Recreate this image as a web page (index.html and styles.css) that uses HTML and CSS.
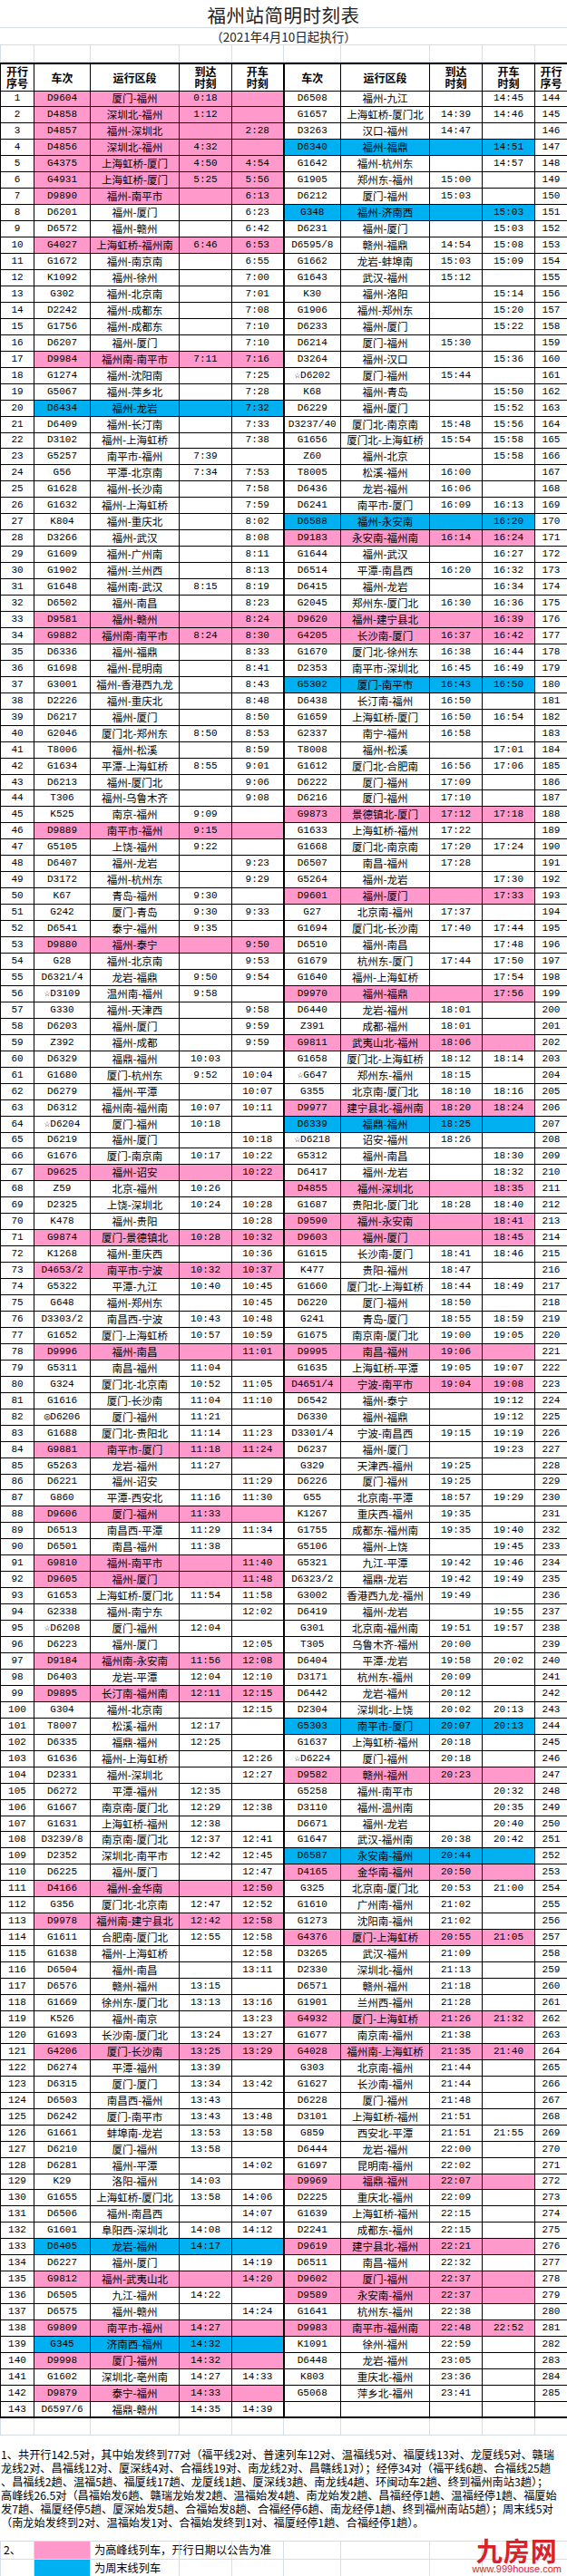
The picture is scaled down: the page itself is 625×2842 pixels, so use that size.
FILE: index.html
```html
<!DOCTYPE html>
<html lang="zh-CN">
<head>
<meta charset="utf-8">
<title>福州站简明时刻表</title>
<link rel="stylesheet" href="styles.css">
</head>
<body>
<div class="sheet">
  <div class="title">福州站简明时刻表</div>
  <div class="subtitle">（2021年4月10日起执行）</div>
  <div class="gridrow"><span></span><span></span><span></span><span></span><span></span><span></span><span></span><span></span><span></span><span></span></div>
  <table class="tt">
    <colgroup><col class="c1"><col class="c2"><col class="c3"><col class="c4"><col class="c5"><col class="c6"><col class="c7"><col class="c8"><col class="c9"><col class="c10"></colgroup>
    <thead>
      <tr><th><span class="hl">开行</span><span class="hl">序号</span></th><th>车次</th><th>运行区段</th><th><span class="hl">到达</span><span class="hl">时刻</span></th><th><span class="hl">开车</span><span class="hl">时刻</span></th><th>车次</th><th>运行区段</th><th><span class="hl">到达</span><span class="hl">时刻</span></th><th><span class="hl">开车</span><span class="hl">时刻</span></th><th><span class="hl">开行</span><span class="hl">序号</span></th></tr>
    </thead>
    <tbody>
<tr class="lp"><td>1</td><td>D9604</td><td>厦门-福州</td><td>0:18</td><td></td><td>D6508</td><td>福州-九江</td><td></td><td>14:45</td><td>144</td></tr>
<tr class="lp"><td>2</td><td>D4858</td><td>深圳北-福州</td><td>1:12</td><td></td><td>G1657</td><td>上海虹桥-厦门北</td><td>14:39</td><td>14:46</td><td>145</td></tr>
<tr class="lp"><td>3</td><td>D4857</td><td>福州-深圳北</td><td></td><td>2:28</td><td>D3263</td><td>汉口-福州</td><td>14:47</td><td></td><td>146</td></tr>
<tr class="lp rb"><td>4</td><td>D4856</td><td>深圳北-福州</td><td>4:32</td><td></td><td>D6340</td><td>福州-福鼎</td><td></td><td>14:51</td><td>147</td></tr>
<tr class="lp"><td>5</td><td>G4375</td><td>上海虹桥-厦门</td><td>4:50</td><td>4:54</td><td>G1642</td><td>福州-杭州东</td><td></td><td>14:57</td><td>148</td></tr>
<tr class="lp"><td>6</td><td>G4931</td><td>上海虹桥-厦门</td><td>5:25</td><td>5:56</td><td>G1905</td><td>郑州东-福州</td><td>15:00</td><td></td><td>149</td></tr>
<tr class="lp"><td>7</td><td>D9890</td><td>福州-南平市</td><td></td><td>6:13</td><td>D6212</td><td>厦门-福州</td><td>15:03</td><td></td><td>150</td></tr>
<tr class="rb"><td>8</td><td>D6201</td><td>福州-厦门</td><td></td><td>6:23</td><td>G348</td><td>福州-济南西</td><td></td><td>15:03</td><td>151</td></tr>
<tr><td>9</td><td>D6572</td><td>福州-赣州</td><td></td><td>6:42</td><td>D6231</td><td>福州-厦门</td><td></td><td>15:03</td><td>152</td></tr>
<tr class="lp"><td>10</td><td>G4027</td><td>上海虹桥-福州南</td><td>6:46</td><td>6:53</td><td>D6595/8</td><td>赣州-福鼎</td><td>14:54</td><td>15:08</td><td>153</td></tr>
<tr><td>11</td><td>G1672</td><td>福州-南京南</td><td></td><td>6:55</td><td>G1662</td><td>龙岩-蚌埠南</td><td>15:03</td><td>15:09</td><td>154</td></tr>
<tr><td>12</td><td>K1092</td><td>福州-徐州</td><td></td><td>7:00</td><td>G1643</td><td>武汉-福州</td><td>15:12</td><td></td><td>155</td></tr>
<tr><td>13</td><td>G302</td><td>福州-北京南</td><td></td><td>7:01</td><td>K30</td><td>福州-洛阳</td><td></td><td>15:14</td><td>156</td></tr>
<tr><td>14</td><td>D2242</td><td>福州-成都东</td><td></td><td>7:08</td><td>G1906</td><td>福州-郑州东</td><td></td><td>15:20</td><td>157</td></tr>
<tr><td>15</td><td>G1756</td><td>福州-成都东</td><td></td><td>7:10</td><td>D6233</td><td>福州-厦门</td><td></td><td>15:22</td><td>158</td></tr>
<tr><td>16</td><td>D6207</td><td>福州-厦门</td><td></td><td>7:10</td><td>D6214</td><td>厦门-福州</td><td>15:30</td><td></td><td>159</td></tr>
<tr class="lp"><td>17</td><td>D9984</td><td>福州南-南平市</td><td>7:11</td><td>7:16</td><td>D3264</td><td>福州-汉口</td><td></td><td>15:36</td><td>160</td></tr>
<tr><td>18</td><td>G1274</td><td>福州-沈阳南</td><td></td><td>7:25</td><td>☆D6202</td><td>厦门-福州</td><td>15:44</td><td></td><td>161</td></tr>
<tr><td>19</td><td>G5067</td><td>福州-萍乡北</td><td></td><td>7:28</td><td>K68</td><td>福州-青岛</td><td></td><td>15:50</td><td>162</td></tr>
<tr class="lb"><td>20</td><td>D6434</td><td>福州-龙岩</td><td></td><td>7:32</td><td>D6229</td><td>福州-厦门</td><td></td><td>15:52</td><td>163</td></tr>
<tr><td>21</td><td>D6409</td><td>福州-长汀南</td><td></td><td>7:33</td><td>D3237/40</td><td>厦门北-南京南</td><td>15:48</td><td>15:56</td><td>164</td></tr>
<tr><td>22</td><td>D3102</td><td>福州-上海虹桥</td><td></td><td>7:38</td><td>G1656</td><td>厦门北-上海虹桥</td><td>15:54</td><td>15:58</td><td>165</td></tr>
<tr><td>23</td><td>G5257</td><td>南平市-福州</td><td>7:39</td><td></td><td>Z60</td><td>福州-北京</td><td></td><td>15:58</td><td>166</td></tr>
<tr><td>24</td><td>G56</td><td>平潭-北京南</td><td>7:34</td><td>7:53</td><td>T8005</td><td>松溪-福州</td><td>16:00</td><td></td><td>167</td></tr>
<tr><td>25</td><td>G1628</td><td>福州-长沙南</td><td></td><td>7:58</td><td>D6436</td><td>龙岩-福州</td><td>16:06</td><td></td><td>168</td></tr>
<tr><td>26</td><td>G1632</td><td>福州-上海虹桥</td><td></td><td>7:59</td><td>D6241</td><td>南平市-厦门</td><td>16:09</td><td>16:13</td><td>169</td></tr>
<tr class="rb"><td>27</td><td>K804</td><td>福州-重庆北</td><td></td><td>8:02</td><td>D6588</td><td>福州-永安南</td><td></td><td>16:20</td><td>170</td></tr>
<tr class="rp"><td>28</td><td>D3266</td><td>福州-武汉</td><td></td><td>8:08</td><td>D9183</td><td>永安南-福州南</td><td>16:14</td><td>16:24</td><td>171</td></tr>
<tr><td>29</td><td>G1609</td><td>福州-广州南</td><td></td><td>8:11</td><td>G1644</td><td>福州-武汉</td><td></td><td>16:27</td><td>172</td></tr>
<tr><td>30</td><td>G1902</td><td>福州-兰州西</td><td></td><td>8:13</td><td>D6514</td><td>平潭-南昌西</td><td>16:20</td><td>16:32</td><td>173</td></tr>
<tr><td>31</td><td>G1648</td><td>福州南-武汉</td><td>8:15</td><td>8:19</td><td>D6415</td><td>福州-龙岩</td><td></td><td>16:34</td><td>174</td></tr>
<tr><td>32</td><td>D6502</td><td>福州-南昌</td><td></td><td>8:23</td><td>G2045</td><td>郑州东-厦门北</td><td>16:30</td><td>16:36</td><td>175</td></tr>
<tr class="lp rp"><td>33</td><td>D9581</td><td>福州-赣州</td><td></td><td>8:24</td><td>D9620</td><td>福州-建宁县北</td><td></td><td>16:39</td><td>176</td></tr>
<tr class="lp rp"><td>34</td><td>G9882</td><td>福州南-南平市</td><td>8:24</td><td>8:30</td><td>G4205</td><td>长沙南-厦门</td><td>16:37</td><td>16:42</td><td>177</td></tr>
<tr><td>35</td><td>D6336</td><td>福州-福鼎</td><td></td><td>8:33</td><td>G1670</td><td>厦门北-徐州东</td><td>16:38</td><td>16:44</td><td>178</td></tr>
<tr><td>36</td><td>G1698</td><td>福州-昆明南</td><td></td><td>8:41</td><td>D2353</td><td>南平市-深圳北</td><td>16:45</td><td>16:49</td><td>179</td></tr>
<tr class="rb"><td>37</td><td>G3001</td><td>福州-香港西九龙</td><td></td><td>8:43</td><td>G5302</td><td>厦门-南平市</td><td>16:43</td><td>16:50</td><td>180</td></tr>
<tr><td>38</td><td>D2226</td><td>福州-重庆北</td><td></td><td>8:48</td><td>D6438</td><td>长汀南-福州</td><td>16:50</td><td></td><td>181</td></tr>
<tr><td>39</td><td>D6217</td><td>福州-厦门</td><td></td><td>8:50</td><td>G1659</td><td>上海虹桥-厦门</td><td>16:50</td><td>16:54</td><td>182</td></tr>
<tr><td>40</td><td>G2046</td><td>厦门北-郑州东</td><td>8:50</td><td>8:53</td><td>G2337</td><td>南宁-福州</td><td>16:58</td><td></td><td>183</td></tr>
<tr><td>41</td><td>T8006</td><td>福州-松溪</td><td></td><td>8:59</td><td>T8008</td><td>福州-松溪</td><td></td><td>17:01</td><td>184</td></tr>
<tr><td>42</td><td>G1634</td><td>平潭-上海虹桥</td><td>8:55</td><td>9:01</td><td>G1612</td><td>厦门北-合肥南</td><td>16:56</td><td>17:06</td><td>185</td></tr>
<tr><td>43</td><td>D6213</td><td>福州-厦门北</td><td></td><td>9:06</td><td>D6222</td><td>厦门-福州</td><td>17:09</td><td></td><td>186</td></tr>
<tr><td>44</td><td>T306</td><td>福州-乌鲁木齐</td><td></td><td>9:08</td><td>D6216</td><td>厦门-福州</td><td>17:10</td><td></td><td>187</td></tr>
<tr class="rp"><td>45</td><td>K525</td><td>南京-福州</td><td>9:09</td><td></td><td>G9873</td><td>景德镇北-厦门</td><td>17:12</td><td>17:18</td><td>188</td></tr>
<tr class="lp"><td>46</td><td>D9889</td><td>南平市-福州</td><td>9:15</td><td></td><td>G1633</td><td>上海虹桥-福州</td><td>17:22</td><td></td><td>189</td></tr>
<tr><td>47</td><td>G5105</td><td>上饶-福州</td><td>9:22</td><td></td><td>G1668</td><td>厦门北-南京南</td><td>17:20</td><td>17:24</td><td>190</td></tr>
<tr><td>48</td><td>D6407</td><td>福州-龙岩</td><td></td><td>9:23</td><td>D6507</td><td>南昌-福州</td><td>17:28</td><td></td><td>191</td></tr>
<tr><td>49</td><td>D3172</td><td>福州-杭州东</td><td></td><td>9:29</td><td>G5264</td><td>福州-龙岩</td><td></td><td>17:30</td><td>192</td></tr>
<tr class="rp"><td>50</td><td>K67</td><td>青岛-福州</td><td>9:30</td><td></td><td>D9601</td><td>福州-厦门</td><td></td><td>17:33</td><td>193</td></tr>
<tr><td>51</td><td>G242</td><td>厦门-青岛</td><td>9:30</td><td>9:33</td><td>G27</td><td>北京南-福州</td><td>17:37</td><td></td><td>194</td></tr>
<tr><td>52</td><td>D6541</td><td>泰宁-福州</td><td>9:35</td><td></td><td>G1694</td><td>厦门北-长沙南</td><td>17:40</td><td>17:44</td><td>195</td></tr>
<tr class="lp"><td>53</td><td>D9880</td><td>福州-泰宁</td><td></td><td>9:50</td><td>D6510</td><td>福州-南昌</td><td></td><td>17:48</td><td>196</td></tr>
<tr><td>54</td><td>G28</td><td>福州-北京南</td><td></td><td>9:53</td><td>G1679</td><td>杭州东-厦门</td><td>17:44</td><td>17:50</td><td>197</td></tr>
<tr><td>55</td><td>D6321/4</td><td>龙岩-福鼎</td><td>9:50</td><td>9:54</td><td>G1640</td><td>福州-上海虹桥</td><td></td><td>17:54</td><td>198</td></tr>
<tr class="rp"><td>56</td><td>☆D3109</td><td>温州南-福州</td><td>9:58</td><td></td><td>D9970</td><td>福州-福鼎</td><td></td><td>17:56</td><td>199</td></tr>
<tr><td>57</td><td>G330</td><td>福州-天津西</td><td></td><td>9:58</td><td>D6440</td><td>龙岩-福州</td><td>18:01</td><td></td><td>200</td></tr>
<tr><td>58</td><td>D6203</td><td>福州-厦门</td><td></td><td>9:59</td><td>Z391</td><td>成都-福州</td><td>18:01</td><td></td><td>201</td></tr>
<tr class="rp"><td>59</td><td>Z392</td><td>福州-成都</td><td></td><td>9:59</td><td>G9811</td><td>武夷山北-福州</td><td>18:06</td><td></td><td>202</td></tr>
<tr><td>60</td><td>D6329</td><td>福鼎-福州</td><td>10:03</td><td></td><td>G1658</td><td>厦门北-上海虹桥</td><td>18:12</td><td>18:14</td><td>203</td></tr>
<tr><td>61</td><td>G1680</td><td>厦门-杭州东</td><td>9:52</td><td>10:04</td><td>☆G647</td><td>郑州东-福州</td><td>18:15</td><td></td><td>204</td></tr>
<tr><td>62</td><td>D6279</td><td>福州-平潭</td><td></td><td>10:07</td><td>G355</td><td>北京南-厦门北</td><td>18:10</td><td>18:16</td><td>205</td></tr>
<tr class="rp"><td>63</td><td>D6312</td><td>福州南-福州南</td><td>10:07</td><td>10:11</td><td>D9977</td><td>建宁县北-福州南</td><td>18:20</td><td>18:24</td><td>206</td></tr>
<tr class="rb"><td>64</td><td>☆D6204</td><td>厦门-福州</td><td>10:18</td><td></td><td>D6339</td><td>福鼎-福州</td><td>18:25</td><td></td><td>207</td></tr>
<tr><td>65</td><td>D6219</td><td>福州-厦门</td><td></td><td>10:18</td><td>☆D6218</td><td>诏安-福州</td><td>18:26</td><td></td><td>208</td></tr>
<tr><td>66</td><td>G1676</td><td>厦门-南京南</td><td>10:17</td><td>10:22</td><td>G5312</td><td>福州-南昌</td><td></td><td>18:30</td><td>209</td></tr>
<tr class="lp"><td>67</td><td>D9625</td><td>福州-诏安</td><td></td><td>10:22</td><td>D6417</td><td>福州-龙岩</td><td></td><td>18:32</td><td>210</td></tr>
<tr class="rp"><td>68</td><td>Z59</td><td>北京-福州</td><td>10:26</td><td></td><td>D4855</td><td>福州-深圳北</td><td></td><td>18:35</td><td>211</td></tr>
<tr><td>69</td><td>D2325</td><td>上饶-深圳北</td><td>10:24</td><td>10:28</td><td>G1687</td><td>贵阳北-厦门北</td><td>18:28</td><td>18:40</td><td>212</td></tr>
<tr class="rp"><td>70</td><td>K478</td><td>福州-贵阳</td><td></td><td>10:28</td><td>D9590</td><td>福州-永安南</td><td></td><td>18:41</td><td>213</td></tr>
<tr class="lp rp"><td>71</td><td>G9874</td><td>厦门-景德镇北</td><td>10:28</td><td>10:32</td><td>D9603</td><td>福州-厦门</td><td></td><td>18:45</td><td>214</td></tr>
<tr><td>72</td><td>K1268</td><td>福州-重庆西</td><td></td><td>10:36</td><td>G1615</td><td>长沙南-厦门</td><td>18:41</td><td>18:46</td><td>215</td></tr>
<tr class="lp"><td>73</td><td>D4653/2</td><td>南平市-宁波</td><td>10:32</td><td>10:37</td><td>K477</td><td>贵阳-福州</td><td>18:47</td><td></td><td>216</td></tr>
<tr><td>74</td><td>G5322</td><td>平潭-九江</td><td>10:40</td><td>10:45</td><td>G1660</td><td>厦门北-上海虹桥</td><td>18:44</td><td>18:49</td><td>217</td></tr>
<tr><td>75</td><td>G648</td><td>福州-郑州东</td><td></td><td>10:45</td><td>D6220</td><td>厦门-福州</td><td>18:50</td><td></td><td>218</td></tr>
<tr><td>76</td><td>D3303/2</td><td>南昌西-宁波</td><td>10:43</td><td>10:48</td><td>G241</td><td>青岛-厦门</td><td>18:55</td><td>18:59</td><td>219</td></tr>
<tr><td>77</td><td>G1652</td><td>厦门-上海虹桥</td><td>10:57</td><td>10:59</td><td>G1675</td><td>南京南-厦门北</td><td>19:00</td><td>19:05</td><td>220</td></tr>
<tr class="lp rp"><td>78</td><td>D9996</td><td>福州-南昌</td><td></td><td>11:01</td><td>D9995</td><td>南昌-福州</td><td>19:06</td><td></td><td>221</td></tr>
<tr><td>79</td><td>G5311</td><td>南昌-福州</td><td>11:04</td><td></td><td>G1635</td><td>上海虹桥-平潭</td><td>19:05</td><td>19:07</td><td>222</td></tr>
<tr class="rp"><td>80</td><td>G324</td><td>厦门北-北京南</td><td>10:52</td><td>11:05</td><td>D4651/4</td><td>宁波-南平市</td><td>19:04</td><td>19:08</td><td>223</td></tr>
<tr><td>81</td><td>G1616</td><td>厦门-长沙南</td><td>11:04</td><td>11:10</td><td>D6542</td><td>福州-泰宁</td><td></td><td>19:12</td><td>224</td></tr>
<tr><td>82</td><td>◎D6206</td><td>厦门-福州</td><td>11:21</td><td></td><td>D6330</td><td>福州-福鼎</td><td></td><td>19:12</td><td>225</td></tr>
<tr><td>83</td><td>G1688</td><td>厦门北-贵阳北</td><td>11:14</td><td>11:23</td><td>D3301/4</td><td>宁波-南昌西</td><td>19:15</td><td>19:19</td><td>226</td></tr>
<tr class="lp"><td>84</td><td>G9881</td><td>南平市-厦门</td><td>11:18</td><td>11:24</td><td>D6237</td><td>福州-厦门</td><td></td><td>19:23</td><td>227</td></tr>
<tr><td>85</td><td>G5263</td><td>龙岩-福州</td><td>11:27</td><td></td><td>G329</td><td>天津西-福州</td><td>19:25</td><td></td><td>228</td></tr>
<tr><td>86</td><td>D6221</td><td>福州-诏安</td><td></td><td>11:29</td><td>D6226</td><td>厦门-福州</td><td>19:25</td><td></td><td>229</td></tr>
<tr><td>87</td><td>G860</td><td>平潭-西安北</td><td>11:16</td><td>11:30</td><td>G55</td><td>北京南-平潭</td><td>18:57</td><td>19:29</td><td>230</td></tr>
<tr class="lp"><td>88</td><td>D9606</td><td>厦门-福州</td><td>11:33</td><td></td><td>K1267</td><td>重庆西-福州</td><td>19:35</td><td></td><td>231</td></tr>
<tr><td>89</td><td>D6513</td><td>南昌西-平潭</td><td>11:29</td><td>11:34</td><td>G1755</td><td>成都东-福州南</td><td>19:35</td><td>19:40</td><td>232</td></tr>
<tr><td>90</td><td>D6501</td><td>南昌-福州</td><td>11:38</td><td></td><td>G5106</td><td>福州-上饶</td><td></td><td>19:45</td><td>233</td></tr>
<tr class="lp"><td>91</td><td>G9810</td><td>福州-南平市</td><td></td><td>11:40</td><td>G5321</td><td>九江-平潭</td><td>19:42</td><td>19:46</td><td>234</td></tr>
<tr class="lp"><td>92</td><td>D9605</td><td>福州-厦门</td><td></td><td>11:48</td><td>D6323/2</td><td>福鼎-龙岩</td><td>19:42</td><td>19:49</td><td>235</td></tr>
<tr><td>93</td><td>G1653</td><td>上海虹桥-厦门北</td><td>11:54</td><td>11:58</td><td>G3002</td><td>香港西九龙-福州</td><td>19:49</td><td></td><td>236</td></tr>
<tr><td>94</td><td>G2338</td><td>福州-南宁东</td><td></td><td>12:02</td><td>D6419</td><td>福州-龙岩</td><td></td><td>19:55</td><td>237</td></tr>
<tr><td>95</td><td>☆D6208</td><td>厦门-福州</td><td>12:04</td><td></td><td>G301</td><td>北京南-福州南</td><td>19:51</td><td>19:57</td><td>238</td></tr>
<tr><td>96</td><td>D6223</td><td>福州-厦门</td><td></td><td>12:05</td><td>T305</td><td>乌鲁木齐-福州</td><td>20:00</td><td></td><td>239</td></tr>
<tr class="lp"><td>97</td><td>D9184</td><td>福州南-永安南</td><td>11:56</td><td>12:08</td><td>D6404</td><td>平潭-龙岩</td><td>19:58</td><td>20:02</td><td>240</td></tr>
<tr><td>98</td><td>D6403</td><td>龙岩-平潭</td><td>12:04</td><td>12:10</td><td>D3171</td><td>杭州东-福州</td><td>20:09</td><td></td><td>241</td></tr>
<tr class="lp"><td>99</td><td>D9895</td><td>长汀南-福州南</td><td>12:11</td><td>12:15</td><td>D6442</td><td>龙岩-福州</td><td>20:12</td><td></td><td>242</td></tr>
<tr><td>100</td><td>G304</td><td>福州-北京南</td><td></td><td>12:15</td><td>D2304</td><td>深圳北-上饶</td><td>20:02</td><td>20:13</td><td>243</td></tr>
<tr class="rb"><td>101</td><td>T8007</td><td>松溪-福州</td><td>12:17</td><td></td><td>G5303</td><td>南平市-厦门</td><td>20:07</td><td>20:13</td><td>244</td></tr>
<tr><td>102</td><td>D6335</td><td>福鼎-福州</td><td>12:25</td><td></td><td>G1637</td><td>上海虹桥-福州</td><td>20:18</td><td></td><td>245</td></tr>
<tr><td>103</td><td>G1636</td><td>福州-上海虹桥</td><td></td><td>12:26</td><td>☆D6224</td><td>厦门-福州</td><td>20:18</td><td></td><td>246</td></tr>
<tr class="rp"><td>104</td><td>D2331</td><td>福州-深圳北</td><td></td><td>12:27</td><td>D9582</td><td>赣州-福州</td><td>20:23</td><td></td><td>247</td></tr>
<tr><td>105</td><td>D6272</td><td>平潭-福州</td><td>12:35</td><td></td><td>G5258</td><td>福州-南平市</td><td></td><td>20:32</td><td>248</td></tr>
<tr><td>106</td><td>G1667</td><td>南京南-厦门北</td><td>12:29</td><td>12:38</td><td>D3110</td><td>福州-温州南</td><td></td><td>20:35</td><td>249</td></tr>
<tr><td>107</td><td>G1631</td><td>上海虹桥-福州</td><td>12:38</td><td></td><td>D6671</td><td>福州-龙岩</td><td></td><td>20:40</td><td>250</td></tr>
<tr><td>108</td><td>D3239/8</td><td>南京南-厦门北</td><td>12:37</td><td>12:41</td><td>G1647</td><td>武汉-福州南</td><td>20:38</td><td>20:42</td><td>251</td></tr>
<tr class="rb"><td>109</td><td>D2352</td><td>深圳北-南平市</td><td>12:42</td><td>12:45</td><td>D6587</td><td>永安南-福州</td><td>20:44</td><td></td><td>252</td></tr>
<tr class="rp"><td>110</td><td>D6225</td><td>福州-厦门</td><td></td><td>12:47</td><td>D4165</td><td>金华南-福州</td><td>20:50</td><td></td><td>253</td></tr>
<tr class="lp"><td>111</td><td>D4166</td><td>福州-金华南</td><td></td><td>12:50</td><td>G325</td><td>北京南-厦门北</td><td>20:53</td><td>21:00</td><td>254</td></tr>
<tr><td>112</td><td>G356</td><td>厦门北-北京南</td><td>12:47</td><td>12:52</td><td>G1610</td><td>广州南-福州</td><td>21:02</td><td></td><td>255</td></tr>
<tr class="lp"><td>113</td><td>D9978</td><td>福州南-建宁县北</td><td>12:42</td><td>12:58</td><td>G1273</td><td>沈阳南-福州</td><td>21:02</td><td></td><td>256</td></tr>
<tr class="rp"><td>114</td><td>G1611</td><td>合肥南-厦门北</td><td>12:55</td><td>12:58</td><td>G4376</td><td>厦门-上海虹桥</td><td>20:55</td><td>21:05</td><td>257</td></tr>
<tr><td>115</td><td>G1638</td><td>福州-上海虹桥</td><td></td><td>12:58</td><td>D3265</td><td>武汉-福州</td><td>21:09</td><td></td><td>258</td></tr>
<tr><td>116</td><td>D6504</td><td>福州-南昌</td><td></td><td>13:11</td><td>D2330</td><td>深圳北-福州</td><td>21:13</td><td></td><td>259</td></tr>
<tr><td>117</td><td>D6576</td><td>赣州-福州</td><td>13:15</td><td></td><td>D6571</td><td>赣州-福州</td><td>21:18</td><td></td><td>260</td></tr>
<tr><td>118</td><td>G1669</td><td>徐州东-厦门北</td><td>13:13</td><td>13:16</td><td>G1901</td><td>兰州西-福州</td><td>21:28</td><td></td><td>261</td></tr>
<tr class="rp"><td>119</td><td>K526</td><td>福州-南京</td><td></td><td>13:23</td><td>G4932</td><td>厦门-上海虹桥</td><td>21:26</td><td>21:32</td><td>262</td></tr>
<tr><td>120</td><td>G1693</td><td>长沙南-厦门北</td><td>13:24</td><td>13:27</td><td>G1677</td><td>南京南-福州</td><td>21:38</td><td></td><td>263</td></tr>
<tr class="lp rp"><td>121</td><td>G4206</td><td>厦门-长沙南</td><td>13:25</td><td>13:29</td><td>G4028</td><td>福州南-上海虹桥</td><td>21:35</td><td>21:40</td><td>264</td></tr>
<tr><td>122</td><td>D6274</td><td>平潭-福州</td><td>13:39</td><td></td><td>G303</td><td>北京南-福州</td><td>21:44</td><td></td><td>265</td></tr>
<tr><td>123</td><td>D6315</td><td>厦门-厦门</td><td>13:34</td><td>13:42</td><td>G1627</td><td>长沙南-福州</td><td>21:44</td><td></td><td>266</td></tr>
<tr><td>124</td><td>D6503</td><td>南昌西-福州</td><td>13:43</td><td></td><td>D6228</td><td>厦门-福州</td><td>21:48</td><td></td><td>267</td></tr>
<tr><td>125</td><td>D6242</td><td>厦门-南平市</td><td>13:43</td><td>13:48</td><td>D3101</td><td>上海虹桥-福州</td><td>21:51</td><td></td><td>268</td></tr>
<tr><td>126</td><td>G1661</td><td>蚌埠南-龙岩</td><td>13:53</td><td>13:58</td><td>G859</td><td>西安北-平潭</td><td>21:51</td><td>21:55</td><td>269</td></tr>
<tr><td>127</td><td>D6210</td><td>厦门-福州</td><td>13:58</td><td></td><td>D6444</td><td>龙岩-福州</td><td>22:00</td><td></td><td>270</td></tr>
<tr><td>128</td><td>D6281</td><td>福州-平潭</td><td></td><td>14:02</td><td>G1697</td><td>昆明南-福州</td><td>22:02</td><td></td><td>271</td></tr>
<tr class="rp"><td>129</td><td>K29</td><td>洛阳-福州</td><td>14:03</td><td></td><td>D9969</td><td>福鼎-福州</td><td>22:07</td><td></td><td>272</td></tr>
<tr><td>130</td><td>G1655</td><td>上海虹桥-厦门北</td><td>13:58</td><td>14:06</td><td>D2225</td><td>重庆北-福州</td><td>22:09</td><td></td><td>273</td></tr>
<tr><td>131</td><td>D6506</td><td>福州-南昌西</td><td></td><td>14:07</td><td>G1639</td><td>上海虹桥-福州</td><td>22:15</td><td></td><td>274</td></tr>
<tr><td>132</td><td>G1601</td><td>阜阳西-深圳北</td><td>14:08</td><td>14:12</td><td>D2241</td><td>成都东-福州</td><td>22:15</td><td></td><td>275</td></tr>
<tr class="lb rp"><td>133</td><td>D6405</td><td>龙岩-福州</td><td>14:17</td><td></td><td>D9619</td><td>建宁县北-福州</td><td>22:21</td><td></td><td>276</td></tr>
<tr><td>134</td><td>D6227</td><td>福州-厦门</td><td></td><td>14:19</td><td>D6511</td><td>南昌-福州</td><td>22:32</td><td></td><td>277</td></tr>
<tr class="lp rp"><td>135</td><td>G9812</td><td>福州-武夷山北</td><td></td><td>14:20</td><td>D9602</td><td>厦门-福州</td><td>22:37</td><td></td><td>278</td></tr>
<tr class="rp"><td>136</td><td>D6505</td><td>九江-福州</td><td>14:22</td><td></td><td>D9589</td><td>永安南-福州</td><td>22:37</td><td></td><td>279</td></tr>
<tr><td>137</td><td>D6575</td><td>福州-赣州</td><td></td><td>14:24</td><td>G1641</td><td>杭州东-福州</td><td>22:38</td><td></td><td>280</td></tr>
<tr class="lp rp"><td>138</td><td>G9809</td><td>南平市-福州</td><td>14:27</td><td></td><td>D9983</td><td>南平市-福州南</td><td>22:48</td><td>22:52</td><td>281</td></tr>
<tr class="lb"><td>139</td><td>G345</td><td>济南西-福州</td><td>14:32</td><td></td><td>K1091</td><td>徐州-福州</td><td>22:59</td><td></td><td>282</td></tr>
<tr class="lp"><td>140</td><td>D9998</td><td>厦门-福州</td><td>14:32</td><td></td><td>D6448</td><td>龙岩-福州</td><td>23:05</td><td></td><td>283</td></tr>
<tr><td>141</td><td>G1602</td><td>深圳北-亳州南</td><td>14:27</td><td>14:33</td><td>K803</td><td>重庆北-福州</td><td>23:36</td><td></td><td>284</td></tr>
<tr class="lp"><td>142</td><td>D9879</td><td>泰宁-福州</td><td>14:33</td><td></td><td>G5068</td><td>萍乡北-福州</td><td>23:41</td><td></td><td>285</td></tr>
<tr><td>143</td><td>D6597/6</td><td>福鼎-赣州</td><td>14:35</td><td>14:39</td><td></td><td></td><td></td><td></td><td></td></tr>
    </tbody>
  </table>
  <div class="gridrow"><span></span><span></span><span></span><span></span><span></span><span></span><span></span><span></span><span></span><span></span></div>
  <div class="notes">
    <div>1、共开行142.5对，其中始发终到77对（福平线2对、普速列车12对、温福线5对、福厦线13对、龙厦线5对、赣瑞</div>
    <div>龙线2对、昌福线12对、厦深线4对、合福线19对、南龙线2对、昌赣线1对）；经停34对（福平线6趟、合福线25趟</div>
    <div>、昌福线2趟、温福5趟、福厦线17趟、龙厦线1趟、厦深线3趟、南龙线4趟、环闽动车2趟、终到福州南站3趟）；</div>
    <div>高峰线26.5对（昌福始发6趟、赣瑞龙始发2趟、温福始发4趟、南龙始发2趟、昌福经停1趟、温福经停1趟、福厦始</div>
    <div>发7趟、福厦经停5趟、厦深始发5趟、合福始发8趟、合福经停6趟、南龙经停1趟、终到福州南站5趟）；周末线5对</div>
    <div>（南龙始发终到2对、温福始发1对、合福始发终到1对、福厦经停1趟、合福经停1趟）。</div>
  </div>
  <div class="legend">
    <div class="gridrow lg"><span class="num">2、</span><span class="sw pink"></span><span class="lt">为高峰线列车，开行日期以公告为准</span><span></span><span></span><span></span><span></span><span></span><span></span></div>
    <div class="gridrow lg"><span></span><span class="sw blue"></span><span class="lt">为周末线列车</span><span></span><span></span><span></span><span></span><span></span><span></span></div>
    <div class="logo">
      <div class="logo-cn">九房网</div>
      <div class="logo-url">www.999house.com</div>
    </div>
  </div>
</div>
</body>
</html>
```

FILE: styles.css
```css
html, body {
  margin: 0;
  padding: 0;
  background: #fff;
}
body {
  font-family: "Noto Sans CJK SC", sans-serif;
  color: #000;
}
.sheet {
  width: 625px;
  overflow: hidden;
}
.title {
  height: 30px;
  line-height: 32px;
  text-align: center;
  font-size: 20.5px;
  color: #222;
  border-bottom: 1px solid #d6dde8;
  letter-spacing: 0.5px;
}
.subtitle {
  height: 18px;
  line-height: 19px;
  text-align: center;
  font-size: 13.5px;
  color: #222;
  border-bottom: 1px solid #d6dde8;
}
.gridrow {
  display: grid;
  grid-template-columns: 37px 62px 98px 58px 57px 63px 98px 58px 58px 36px;
  height: 18px;
  border-bottom: 1px solid #d6dde8;
}
.gridrow > span {
  border-left: 1px solid #d6dde8;
}
.tt {
  width: 625px;
  table-layout: fixed;
  border-collapse: collapse;
}
.c1 { width: 37px; }
.c2 { width: 62px; }
.c3 { width: 98px; }
.c4 { width: 58px; }
.c5 { width: 57px; }
.c6 { width: 63px; }
.c7 { width: 98px; }
.c8 { width: 58px; }
.c9 { width: 58px; }
.c10 { width: 36px; }
.tt th, .tt td {
  border: 1px solid #000;
  padding: 0;
  text-align: center;
  overflow: hidden;
  white-space: nowrap;
}
.tt thead tr { height: 30px; }
.tt th {
  border-top: 2px solid #000;
  font-weight: bold;
  font-size: 12px;
  line-height: 13px;
}
.tt th .hl {
  display: block;
  height: 13px;
  line-height: 13px;
}
.tt tbody tr { height: 17.96px; }
.tt td {
  font-family: "Liberation Mono", "DejaVu Sans Mono", monospace;
  font-size: 11px;
  line-height: 15px;
}
.tt td:nth-child(3), .tt td:nth-child(7) {
  font-family: "Noto Sans CJK SC", sans-serif;
  font-size: 11.5px;
}
.tt th:nth-child(6), .tt td:nth-child(6) {
  border-left: 2px solid #000;
}
.tt tbody tr:last-child td {
  border-bottom: 2px solid #000;
}
tr.lp > td:nth-child(n+2):nth-child(-n+5),
tr.rp > td:nth-child(n+6):nth-child(-n+9) {
  background: #ff99cc;
}
tr.lb > td:nth-child(n+2):nth-child(-n+5),
tr.rb > td:nth-child(n+6):nth-child(-n+9) {
  background: #00b0f0;
}
.notes {
  padding: 14px 0 12px 1px;
  font-size: 12.2px;
  line-height: 15px;
  white-space: nowrap;
  border-bottom: 1px solid #d6dde8;
}
.legend {
  position: relative;
}
.gridrow.lg {
  height: 19px;
  font-size: 12.2px;
  line-height: 19px;
}
.gridrow.lg > .num {
  padding-left: 3px;
}
.gridrow.lg > .sw.pink { background: #ff99cc; }
.gridrow.lg > .sw.blue { background: #00b0f0; }
.gridrow.lg > .lt {
  padding-left: 4px;
  white-space: nowrap;
  overflow: visible;
}
.logo {
  position: absolute;
  right: 6px;
  top: -6px;
  text-align: center;
  color: #d8232a;
}
.logo-cn {
  font-size: 29px;
  font-weight: bold;
  line-height: 31px;
  letter-spacing: 1px;
}
.logo-url {
  font-family: "Liberation Sans", sans-serif;
  font-size: 11px;
  line-height: 11px;
}
```
